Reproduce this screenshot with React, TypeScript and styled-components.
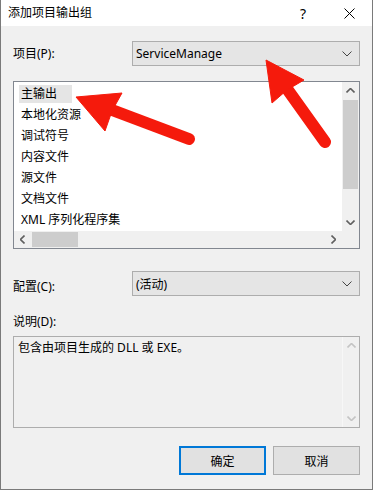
import React from 'react';
import styled, { createGlobalStyle } from 'styled-components';

const Global = createGlobalStyle`
  html, body { margin: 0; padding: 0; background: #ffffff; }
  body {
    font-family: "Noto Sans", "Noto Sans CJK SC", sans-serif;
    font-size: 12px;
    color: #000;
  }
  * { box-sizing: border-box; }
`;

const Window = styled.div`
  position: relative;
  width: 373px;
  height: 490px;
  border: 1px solid #7a7a7a;
  border-top: none;
  background: #f0f0f0;
  display: flex;
  flex-direction: column;
`;

const TitleBar = styled.div`
  height: 26px;
  background: #ffffff;
  display: flex;
  align-items: center;
  padding-left: 7px;
  flex: none;
`;

const Title = styled.div`
  flex: 1;
  font-size: 12px;
  line-height: 16px;
  color: #000;
`;

const CaptionButton = styled.div`
  width: 46px;
  height: 26px;
  display: flex;
  align-items: center;
  justify-content: center;
  font-size: 14px;
  color: #000;
`;

const Body = styled.div`
  flex: 1;
  display: flex;
  flex-direction: column;
  padding: 15px 12px 0 12px;
`;

const FieldRow = styled.div<{ $mt?: number }>`
  display: grid;
  grid-template-columns: 119px 1fr;
  align-items: center;
  margin-top: ${p => p.$mt ?? 0}px;
`;

const Label = styled.div<{ $dy?: number }>`
  font-size: 12px;
  line-height: 16px;
  padding-top: ${p => p.$dy ?? 0}px;
`;

const Combo = styled.div`
  height: 25px;
  border: 1px solid #adadad;
  background: #e5e5e5;
  display: flex;
  align-items: center;
  padding: 0 7px 0 3px;
  font-size: 12px;
`;

const ComboText = styled.span`
  flex: 1;
`;

const ListBox = styled.div`
  margin-top: 15px;
  height: 168px;
  border: 1px solid #828790;
  display: grid;
  grid-template-columns: 1fr 17px;
  grid-template-rows: 1fr 17px;
  background: #f0f0f0;
`;

const ListItems = styled.div`
  background: #ffffff;
  padding: 1px 0 0 5px;
  overflow: hidden;
`;

const ListRow = styled.div`
  height: 21px;
  display: flex;
  align-items: center;
`;

const ItemText = styled.span<{ $selected?: boolean }>`
  display: inline-block;
  line-height: 18px;
  padding: 0 2px;
  background: ${p => (p.$selected ? '#e5e5e5' : 'transparent')};
  min-width: ${p => (p.$selected ? '53px' : '0')};
`;

const VScroll = styled.div`
  display: grid;
  grid-template-rows: 17px 1fr 17px;
  background: #f0f0f0;
`;

const HScroll = styled.div`
  display: grid;
  grid-template-columns: 17px 1fr 17px;
  background: #f0f0f0;
`;

const ArrowBtn = styled.div`
  display: flex;
  align-items: center;
  justify-content: center;
`;

const VTrack = styled.div`
  padding: 1px 1px 0 1px;
`;

const VThumb = styled.div`
  height: 89px;
  background: #cdcdcd;
`;

const HTrack = styled.div`
  padding: 1px 0 1px 1px;
`;

const HThumb = styled.div`
  width: 46px;
  height: 100%;
  background: #cdcdcd;
`;

const Corner = styled.div`
  background: #f0f0f0;
`;

const DescLabel = styled.div`
  margin-top: 18px;
  line-height: 16px;
`;

const DescBox = styled.div`
  margin-top: 6px;
  height: 92px;
  border: 1px solid #adadad;
  display: grid;
  grid-template-columns: 1fr 17px;
  background: #f0f0f0;
`;

const DescText = styled.div`
  padding: 3px 0 0 4px;
  line-height: 16px;
`;

const DescScroll = styled.div`
  display: flex;
  flex-direction: column;
  justify-content: space-between;
  background: #f0f0f0;
  border-left: 1px solid #f7f7f7;
`;

const ButtonRow = styled.div`
  margin-top: 18px;
  display: flex;
  justify-content: flex-end;
  gap: 7px;
`;

const Button = styled.div<{ $primary?: boolean }>`
  width: 87px;
  height: 29px;
  display: flex;
  align-items: center;
  justify-content: center;
  background: #e1e1e1;
  border: ${p => (p.$primary ? '2px solid #0078d7' : '1px solid #adadad')};
  font-size: 12px;
`;

const Overlay = styled.svg`
  position: absolute;
  left: -1px;
  top: 0;
  pointer-events: none;
`;

const Chevron = ({ dir, color = '#606060', size = 8 }: { dir: 'up' | 'down' | 'left' | 'right'; color?: string; size?: number }) => {
  const h = size / 2;
  let d = '';
  if (dir === 'up') d = `M0.5 ${h + 0.5} L${size / 2 + 0.5} 0.5 L${size + 0.5} ${h + 0.5}`;
  if (dir === 'down') d = `M0.5 0.5 L${size / 2 + 0.5} ${h + 0.5} L${size + 0.5} 0.5`;
  if (dir === 'left') d = `M${h + 0.5} 0.5 L0.5 ${size / 2 + 0.5} L${h + 0.5} ${size + 0.5}`;
  if (dir === 'right') d = `M0.5 0.5 L${h + 0.5} ${size / 2 + 0.5} L0.5 ${size + 0.5}`;
  const vertical = dir === 'up' || dir === 'down';
  return (
    <svg width={vertical ? size + 1 : h + 1} height={vertical ? h + 1 : size + 1} viewBox={`0 0 ${vertical ? size + 1 : h + 1} ${vertical ? h + 1 : size + 1}`}>
      <path d={d} fill="none" stroke={color} strokeWidth={1.6} />
    </svg>
  );
};

const ComboChevron = () => (
  <svg width="10" height="6" viewBox="0 0 10 6">
    <path d="M0.5 0.5 L5 5 L9.5 0.5" fill="none" stroke="#444" strokeWidth={1} />
  </svg>
);

const CloseIcon = () => (
  <svg width="11" height="11" viewBox="0 0 11 11">
    <path d="M0.5 0.5 L10.5 10.5 M10.5 0.5 L0.5 10.5" stroke="#000" strokeWidth={1} />
  </svg>
);

const items = ['主输出', '本地化资源', '调试符号', '内容文件', '源文件', '文档文件', 'XML 序列化程序集'];

export default function App() {
  return (
    <>
      <Global />
      <Window>
        <TitleBar>
          <Title>添加项目输出组</Title>
          <CaptionButton>?</CaptionButton>
          <CaptionButton><CloseIcon /></CaptionButton>
        </TitleBar>
        <Body>
          <FieldRow>
            <Label>项目(P):</Label>
            <Combo>
              <ComboText>ServiceManage</ComboText>
              <ComboChevron />
            </Combo>
          </FieldRow>
          <ListBox>
            <ListItems>
              {items.map((it, i) => (
                <ListRow key={it}>
                  <ItemText $selected={i === 0}>{it}</ItemText>
                </ListRow>
              ))}
            </ListItems>
            <VScroll>
              <ArrowBtn><Chevron dir="up" /></ArrowBtn>
              <VTrack><VThumb /></VTrack>
              <ArrowBtn><Chevron dir="down" /></ArrowBtn>
            </VScroll>
            <HScroll>
              <ArrowBtn><Chevron dir="left" /></ArrowBtn>
              <HTrack><HThumb /></HTrack>
              <ArrowBtn><Chevron dir="right" /></ArrowBtn>
            </HScroll>
            <Corner />
          </ListBox>
          <FieldRow $mt={22}>
            <Label $dy={6}>配置(C):</Label>
            <Combo>
              <ComboText>(活动)</ComboText>
              <ComboChevron />
            </Combo>
          </FieldRow>
          <DescLabel>说明(D):</DescLabel>
          <DescBox>
            <DescText>包含由项目生成的 DLL 或 EXE。</DescText>
            <DescScroll>
              <ArrowBtn style={{ height: 17 }}><Chevron dir="up" color="#c4c4c4" /></ArrowBtn>
              <ArrowBtn style={{ height: 17 }}><Chevron dir="down" color="#c4c4c4" /></ArrowBtn>
            </DescScroll>
          </DescBox>
          <ButtonRow>
            <Button $primary>确定</Button>
            <Button>取消</Button>
          </ButtonRow>
        </Body>
        <Overlay width="374" height="491" viewBox="0 0 374 491">
          <g fill="#f51a0c" stroke="#f51a0c">
            <line x1="189" y1="139" x2="112" y2="110" strokeWidth="12" strokeLinecap="round" />
            <polygon points="76,97 122,93 112,111 105,131" strokeWidth="1" strokeLinejoin="round" />
            <line x1="325" y1="142" x2="285" y2="86" strokeWidth="12" strokeLinecap="round" />
            <polygon points="266,60 304,80 287,90 272,103" strokeWidth="1" strokeLinejoin="round" />
          </g>
        </Overlay>
      </Window>
    </>
  );
}
